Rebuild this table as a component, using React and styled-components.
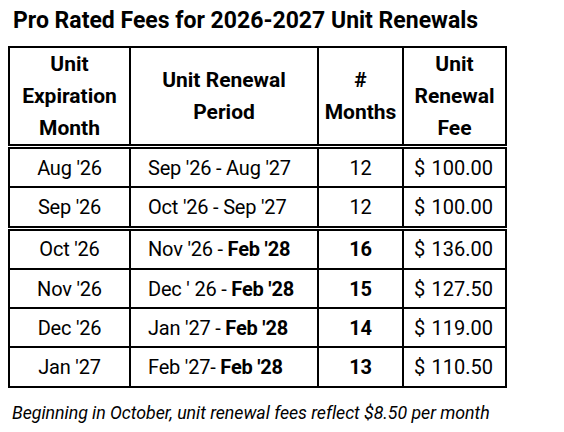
import React from 'react'
import styled, { createGlobalStyle } from 'styled-components'

const GlobalStyle = createGlobalStyle`
  body {
    margin: 0;
    background: #ffffff;
    font-family: Roboto, "Liberation Sans", sans-serif;
    color: #000000;
  }
`

const Page = styled.div`
  width: 564px;
  height: 432px;
  padding: 6px 0 0 8px;
  box-sizing: border-box;
`

const Title = styled.h1`
  margin: 0 0 10px 5px;
  font-size: 23px;
  line-height: 30px;
  font-weight: 700;
`

const Table = styled.table`
  border-collapse: collapse;
  width: 497px;
  table-layout: fixed;
  border: 2px solid #000;
`

const Head = styled.th`
  border: 2px solid #000;
  border-bottom: 5px double #000;
  font-size: 21px;
  font-weight: 700;
  line-height: 32px;
  padding: 0;
  height: 93px;
  text-align: center;
  vertical-align: middle;
`

const Cell = styled.td`
  border: 2px solid #000;
  border-bottom: ${p => (p.$double ? '5px double #000' : '2px solid #000')};
  font-size: 20px;
  height: 37.3px;
  padding: 0;
  padding-left: ${p => (p.$align === 'left' ? '17px' : '0')};
  text-align: ${p => p.$align || 'center'};
  font-weight: ${p => (p.$bold ? 700 : 400)};
  letter-spacing: -0.2px;
  vertical-align: middle;
`

const FeeCell = styled.td`
  border: 2px solid #000;
  border-bottom: ${p => (p.$double ? '5px double #000' : '2px solid #000')};
  font-size: 20px;
  height: 37.3px;
  padding: 0 12px 0 10px;
`

const Fee = styled.div`
  display: flex;
  justify-content: space-between;
`

const Strong = styled.b`
  font-weight: 700;
`

const Note = styled.p`
  margin: 14px 0 0 4px;
  font-size: 17.8px;
  letter-spacing: -0.05px;
  font-style: italic;
`

const rows = [
  { exp: "Aug '26", from: "Sep '26 - ", to: "Aug '27", months: 12, fee: '100.00' },
  { exp: "Sep '26", from: "Oct '26 - ", to: "Sep '27", months: 12, fee: '100.00', double: true },
  { exp: "Oct '26", from: "Nov '26 - ", to: "Feb '28", months: 16, fee: '136.00', bold: true },
  { exp: "Nov '26", from: "Dec ' 26 - ", to: "Feb '28", months: 15, fee: '127.50', bold: true },
  { exp: "Dec '26", from: "Jan '27 - ", to: "Feb '28", months: 14, fee: '119.00', bold: true },
  { exp: "Jan '27", from: "Feb '27- ", to: "Feb '28", months: 13, fee: '110.50', bold: true },
]

export default function App() {
  return (
    <Page>
      <GlobalStyle />
      <Title>Pro Rated Fees for 2026-2027 Unit Renewals</Title>
      <Table>
        <colgroup>
          <col style={{ width: 121 }} />
          <col style={{ width: 188 }} />
          <col style={{ width: 85 }} />
          <col style={{ width: 103 }} />
        </colgroup>
        <thead>
          <tr>
            <Head>Unit<br />Expiration<br />Month</Head>
            <Head>Unit Renewal<br />Period</Head>
            <Head>#<br />Months</Head>
            <Head>Unit<br />Renewal<br />Fee</Head>
          </tr>
        </thead>
        <tbody>
          {rows.map(r => (
            <tr key={r.exp}>
              <Cell $double={r.double}>{r.exp}</Cell>
              <Cell $double={r.double} $align="left">
                {r.from}
                {r.bold ? <Strong>{r.to}</Strong> : r.to}
              </Cell>
              <Cell $double={r.double} $bold={r.bold}>{r.months}</Cell>
              <FeeCell $double={r.double}>
                <Fee><span>$</span><span>{r.fee}</span></Fee>
              </FeeCell>
            </tr>
          ))}
        </tbody>
      </Table>
      <Note>Beginning in October, unit renewal fees reflect $8.50 per month</Note>
    </Page>
  )
}
